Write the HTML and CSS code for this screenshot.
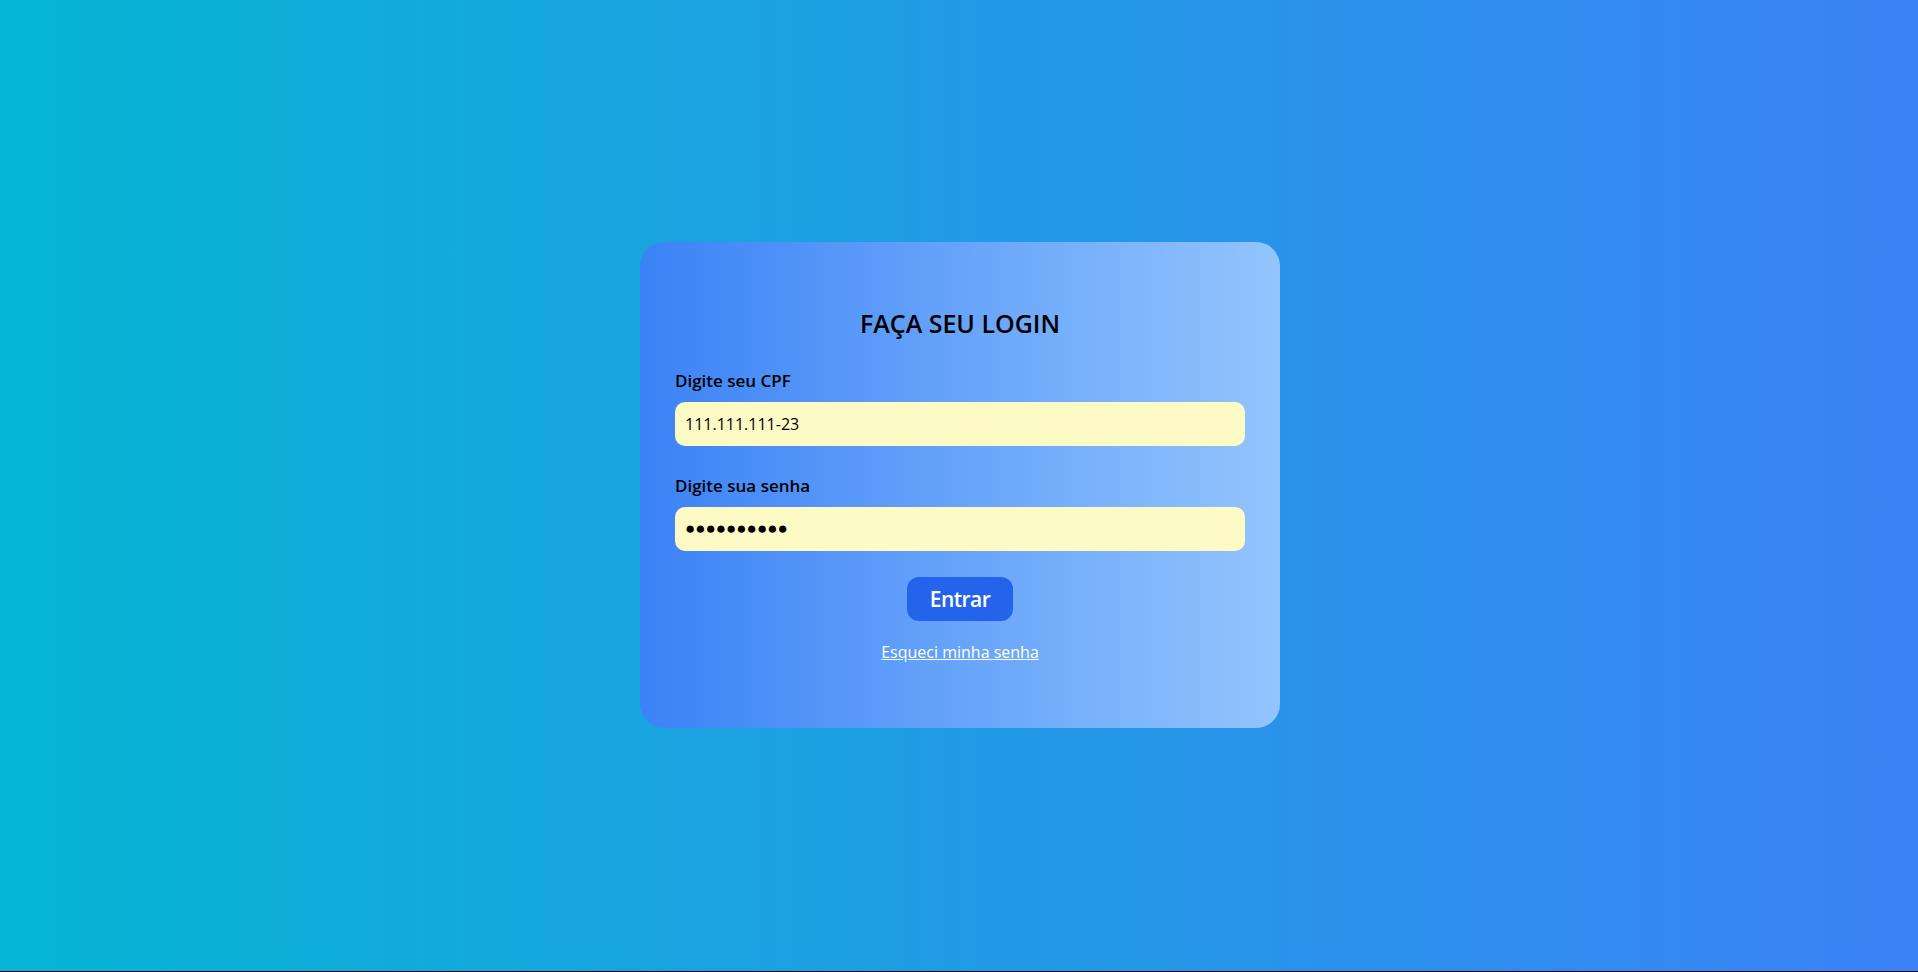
FILE: index.html
```html
<!DOCTYPE html>
<html lang="pt-BR">
<head>
<meta charset="utf-8">
<title>Login</title>
<link rel="stylesheet" href="styles.css">
</head>
<body>
<main class="page">
  <form class="card">
    <h1 class="title">FAÇA SEU LOGIN</h1>
    <div class="field">
      <label class="label" for="cpf">Digite seu CPF</label>
      <input class="input" id="cpf" type="text" value="111.111.111-23">
    </div>
    <div class="field">
      <label class="label" for="senha">Digite sua senha</label>
      <input class="input input-password" id="senha" type="text" value="●●●●●●●●●●" aria-label="senha">
    </div>
    <button class="button" type="button">Entrar</button>
    <a class="link" href="#">Esqueci minha senha</a>
  </form>
</main>
</body>
</html>
```
FILE: styles.css
```css
html {
  background: #000;
}
body {
  margin: 0;
  font-family: "Open Sans", "Noto Sans", sans-serif;
}
.page {
  height: calc(100vh - 1px);
  box-sizing: border-box;
  padding-left: 2px;
  display: flex;
  align-items: center;
  justify-content: center;
  background: linear-gradient(to right, #06b6d4, #3b82f6);
}
.card {
  width: 640px;
  box-sizing: border-box;
  margin-bottom: 1px;
  padding: 63px 35px 64px;
  border-radius: 24px;
  background: linear-gradient(to right, #3b82f6, #93c5fd);
  display: flex;
  flex-direction: column;
  align-items: center;
}
.title {
  margin: 0 0 28px;
  font-size: 25px;
  line-height: 36px;
  font-weight: 600;
  color: #000;
}
.field {
  width: 100%;
  display: flex;
  flex-direction: column;
  gap: 10px;
  margin-bottom: 28px;
}
.field + .field {
  margin-bottom: 26px;
}
.label {
  font-size: 17px;
  line-height: 23px;
  font-weight: 600;
  color: #000;
}
.input {
  height: 44px;
  box-sizing: border-box;
  border: none;
  border-radius: 10px;
  padding: 0 10px;
  background: #fefac6;
  font-family: inherit;
  font-size: 16px;
  color: #000;
  outline: none;
}
.input-password {
  font-family: "Liberation Sans", sans-serif;
  font-size: 17px;
}
.button {
  height: 44px;
  padding: 0 23px;
  border: none;
  border-radius: 12px;
  background: #2563eb;
  color: #fff;
  font-family: inherit;
  font-size: 21px;
  font-weight: 600;
  letter-spacing: -0.5px;
  margin-bottom: 19px;
}
.link {
  font-size: 16px;
  line-height: 24px;
  color: #fff;
  text-decoration: underline;
}
```
